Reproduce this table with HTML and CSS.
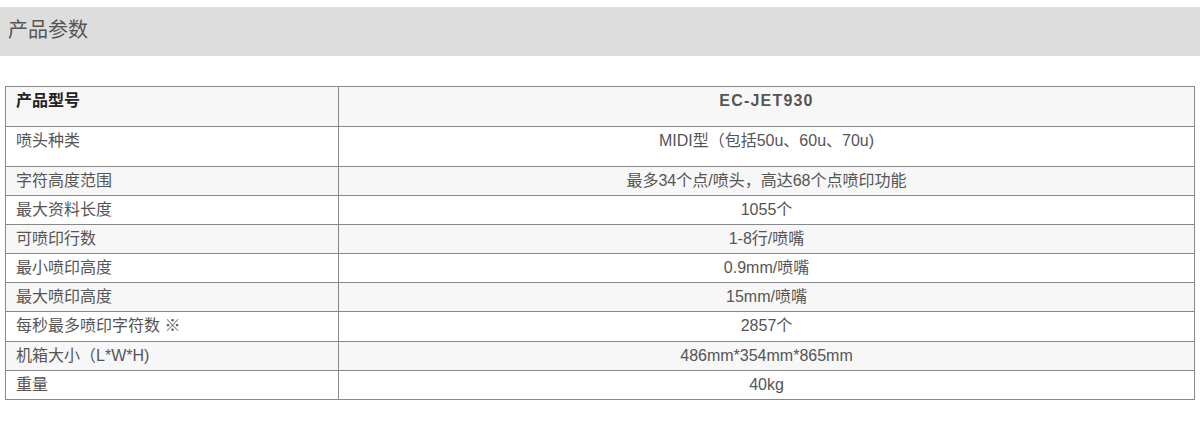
FILE: index.html
```html
<!DOCTYPE html>
<html lang="zh-CN">
<head>
<meta charset="utf-8">
<title>产品参数</title>
<link rel="stylesheet" href="styles.css">
</head>
<body>
<div class="page">
  <div class="section-title">产品参数</div>
  <table class="spec">
    <tbody>
      <tr class="tall alt head">
        <td class="label"><strong>产品型号</strong></td>
        <td class="value"><strong class="model">EC-JET930</strong></td>
      </tr>
      <tr class="tall">
        <td class="label">喷头种类</td>
        <td class="value">MIDI型（包括50u、60u、70u)</td>
      </tr>
      <tr class="alt">
        <td class="label">字符高度范围</td>
        <td class="value">最多34个点/喷头，高达68个点喷印功能</td>
      </tr>
      <tr>
        <td class="label">最大资料长度</td>
        <td class="value">1055个</td>
      </tr>
      <tr class="alt">
        <td class="label">可喷印行数</td>
        <td class="value">1-8行/喷嘴</td>
      </tr>
      <tr>
        <td class="label">最小喷印高度</td>
        <td class="value">0.9mm/喷嘴</td>
      </tr>
      <tr class="alt">
        <td class="label">最大喷印高度</td>
        <td class="value">15mm/喷嘴</td>
      </tr>
      <tr class="wide">
        <td class="label">每秒最多喷印字符数 ※</td>
        <td class="value">2857个</td>
      </tr>
      <tr class="alt">
        <td class="label">机箱大小（L*W*H)</td>
        <td class="value">486mm*354mm*865mm</td>
      </tr>
      <tr>
        <td class="label">重量</td>
        <td class="value">40kg</td>
      </tr>
    </tbody>
  </table>
</div>
</body>
</html>
```

FILE: styles.css
```css
html, body {
  margin: 0;
  padding: 0;
  background: #fff;
}

body {
  font-family: "Liberation Sans", "Noto Sans CJK SC", Arial, sans-serif;
  color: #555;
}

.page {
  width: 1200px;
  padding-top: 7px;
}

.section-title {
  background: #dddddd;
  height: 49px;
  line-height: 47px;
  padding-left: 8px;
  font-size: 20px;
  color: #555;
  margin-bottom: 30px;
}

.spec {
  margin-left: 5px;
  width: 1190px;
  border-collapse: collapse;
  border: 1px solid #333;
  font-size: 16px;
}

.spec td {
  border: 1px solid #888;
  padding: 0 10px;
  height: 28px;
  line-height: 28px;
  vertical-align: top;
}

.spec .label {
  width: 312px;
  text-align: left;
}

.spec .value {
  text-align: center;
}

.spec tr.alt td {
  background: #f7f7f7;
}

.spec tr.tall td {
  height: 39px;
}

.spec tr.wide td {
  height: 29px;
}

.spec tr.head .label {
  color: #222;
}

.spec tr.head .value {
  color: #555;
}

.spec strong {
  font-weight: bold;
}

.spec .model {
  letter-spacing: 1.2px;
}
```
